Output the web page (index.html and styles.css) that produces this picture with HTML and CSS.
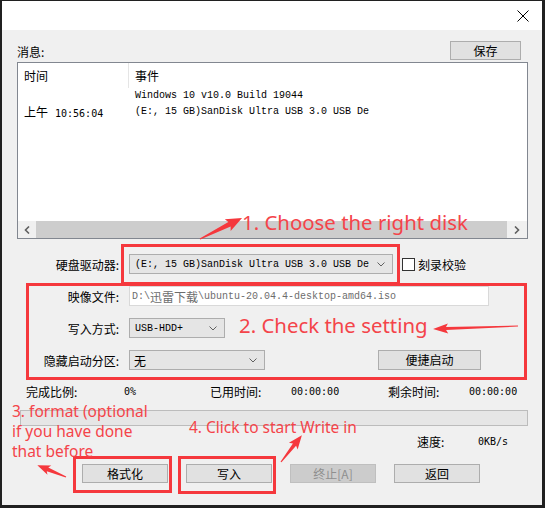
FILE: index.html
```html
<!DOCTYPE html>
<html lang="zh-CN">
<head>
<meta charset="utf-8">
<title>写入硬盘映像</title>
<link rel="stylesheet" href="styles.css">
</head>
<body>
<div class="window">
  <div class="titlebar">
    <svg class="close" width="12" height="12" viewBox="0 0 12 12"><path d="M0.5 0.5 L11.5 11.5 M11.5 0.5 L0.5 11.5" stroke="#000" stroke-width="1" fill="none"/></svg>
  </div>
  <div class="body">
    <div class="msg-head">
      <span class="msg-label">消息:</span>
      <div class="btn save">保存</div>
    </div>
    <div class="listbox">
      <div class="lb-head">
        <div class="lb-col-time">时间</div>
        <div class="lb-col-event">事件</div>
      </div>
      <div class="lb-rows">
        <div class="lb-row"><div class="lb-time"></div><div class="lb-event mono">Windows 10 v10.0 Build 19044</div></div>
        <div class="lb-row"><div class="lb-time">上午<span class="num clock">10:56:04</span></div><div class="lb-event mono">(E:, 15 GB)SanDisk Ultra USB 3.0 USB De</div></div>
      </div>
      <div class="hscroll">
        <div class="sb-arrow"><svg width="6" height="8" viewBox="0 0 6 8"><path d="M5 0.5 L1.5 4 L5 7.5" stroke="#606060" stroke-width="1.6" fill="none"/></svg></div>
        <div class="sb-thumb"></div>
        <div class="sb-arrow sb-right"><svg width="6" height="8" viewBox="0 0 6 8"><path d="M1 0.5 L4.5 4 L1 7.5" stroke="#606060" stroke-width="1.6" fill="none"/></svg></div>
      </div>
    </div>

    <div class="frow first">
      <div class="flabel">硬盘驱动器:</div>
      <div class="combo combo-disk"><span class="mono">(E:, 15 GB)SanDisk Ultra USB 3.0 USB De</span><svg class="chev" width="8" height="5" viewBox="0 0 8 5"><path d="M0.5 0.5 L4 4 L7.5 0.5" stroke="#606060" stroke-width="1" fill="none"/></svg></div>
      <div class="checkbox"></div>
      <div class="check-label">刻录校验</div>
    </div>
    <div class="frow">
      <div class="flabel">映像文件:</div>
      <div class="field"><span class="mono">D:\</span><span class="cjk">迅雷下载</span><span class="mono">\ubuntu-20.04.4-desktop-amd64.iso</span></div>
    </div>
    <div class="frow">
      <div class="flabel">写入方式:</div>
      <div class="combo combo-mode"><span class="mono">USB-HDD+</span><svg class="chev" width="8" height="5" viewBox="0 0 8 5"><path d="M0.5 0.5 L4 4 L7.5 0.5" stroke="#606060" stroke-width="1" fill="none"/></svg></div>
    </div>
    <div class="frow">
      <div class="flabel">隐藏启动分区:</div>
      <div class="combo combo-hide"><span>无</span><svg class="chev" width="8" height="5" viewBox="0 0 8 5"><path d="M0.5 0.5 L4 4 L7.5 0.5" stroke="#606060" stroke-width="1" fill="none"/></svg></div>
      <div class="btn quick">便捷启动</div>
    </div>

    <div class="stats">
      <span>完成比例:</span><span class="num">0%</span>
      <span>已用时间:</span><span class="num">00:00:00</span>
      <span>剩余时间:</span><span class="num">00:00:00</span>
    </div>
    <div class="progress"></div>
    <div class="speed"><span class="speed-label">速度:</span><span class="num">0KB/s</span></div>
    <div class="actions">
      <div class="btn act">格式化</div>
      <div class="btn act">写入</div>
      <div class="btn act disabled">终止[A]</div>
      <div class="btn act">返回</div>
    </div>
  </div>

  <div class="annot">
    <div class="rbox rbox1"></div>
    <div class="rbox rbox2"></div>
    <div class="rbox rbox3"></div>
    <div class="rbox rbox4"></div>
    <div class="note note1">1. Choose the right disk</div>
    <div class="note note2">2. Check the setting</div>
    <div class="note note3">3. format (optional<br>if you have done<br>that before</div>
    <div class="note note4">4. Click to start Write in</div>
    <svg class="arrows" width="545" height="508" viewBox="0 0 545 508">
      <g fill="#f5383d">
        <polygon transform="translate(200,239) rotate(-26.6)" points="0,-0.6 33,-2.5 31,-6.5 47,0 31,6.5 33,2.5 0,0.6"/>
        <polygon transform="translate(518,326) rotate(178)" points="0,-0.5 72,-1.6 70,-5 85,0 70,5 72,1.6 0,0.5"/>
        <polygon transform="translate(66,477) rotate(202.5)" points="0,-0.6 20,-2 18,-5 31,0 18,5 20,2 0,0.6"/>
        <polygon transform="translate(281,462) rotate(-52.1)" points="0,-0.6 22,-2 20,-5.5 34,0 20,5.5 22,2 0,0.6"/>
      </g>
    </svg>
  </div>
</div>
</body>
</html>
```
FILE: styles.css
```css
* { box-sizing: border-box; }
html, body { margin: 0; padding: 0; }
body {
  width: 545px;
  height: 508px;
  overflow: hidden;
  background: #f0f0f0;
  font-family: "Noto Sans CJK SC", "Noto Sans", sans-serif;
  font-size: 12px;
  color: #000;
}
.mono { font-family: "Liberation Mono", "Noto Sans CJK SC", monospace; font-size: 10px; }
.num { font-family: "DejaVu Sans Mono", monospace; font-size: 10px; }
.cjk { font-family: "Noto Sans CJK SC", sans-serif; font-size: 12px; }
.clock { margin-left: 7px; }

.window {
  position: relative;
  width: 545px;
  height: 508px;
  border-style: solid;
  border-color: #202020;
  border-width: 1px 3px 3px 2px;
  background: #f0f0f0;
  overflow: hidden;
}
.titlebar {
  height: 29px;
  background: #fff;
  display: flex;
  justify-content: flex-end;
  align-items: flex-start;
  padding: 9px 13px 0 0;
}
.close { display: block; }

.msg-head {
  display: flex;
  align-items: flex-end;
  height: 19px;
  margin-top: 11px;
  padding: 0 21px 0 15px;
}
.msg-label { line-height: 14px; margin-bottom: 1px; }
.btn {
  display: flex;
  align-items: center;
  justify-content: center;
  height: 19px;
  background: #e1e1e1;
  border: 1px solid #adadad;
  font-size: 12px;
  line-height: 1;
}
.save { margin-left: auto; width: 71px; }

.listbox {
  margin: 2px 0 0 15px;
  width: 511px;
  height: 177px;
  border: 1px solid #828790;
  background: #fff;
  display: flex;
  flex-direction: column;
}
.lb-head { display: flex; height: 25px; line-height: 25px; }
.lb-col-time { width: 111px; padding-left: 6px; border-right: 1px solid #e5e5e5; }
.lb-col-event { padding-left: 6px; }
.lb-rows { flex: 1; }
.lb-row { display: flex; height: 16px; line-height: 16px; }
.lb-time { width: 111px; padding-left: 6px; white-space: nowrap; }
.lb-event { padding-left: 6px; white-space: nowrap; }
.hscroll { display: flex; height: 17px; background: #f0f0f0; }
.sb-arrow { width: 18px; display: flex; align-items: center; justify-content: center; }
.sb-right { width: 20px; }
.sb-arrow svg { display: block; }
.sb-thumb { flex: 1; background: #cdcdcd; }

.frow {
  display: flex;
  align-items: center;
  height: 20px;
  margin-top: 12px;
}
.frow.first { margin-top: 15px; }
.flabel { width: 117px; margin-right: 10px; text-align: right; white-space: nowrap; }
.combo {
  height: 20px;
  background: #e5e5e5;
  border: 1px solid #adadad;
  display: flex;
  align-items: center;
  padding: 0 7px 0 5px;
  white-space: nowrap;
}
.combo .chev { margin-left: auto; display: block; }
.combo-disk { width: 264px; }
.combo-mode { width: 96px; }
.combo-hide { width: 136px; padding-left: 4px; }
.checkbox {
  width: 13px;
  height: 13px;
  border: 1px solid #333;
  background: #fff;
  margin-left: 9px;
}
.check-label { margin-left: 3px; }
.field {
  width: 360px;
  height: 20px;
  background: #fff;
  border: 1px solid #d9d9d9;
  color: #6d6d6d;
  display: flex;
  align-items: center;
  padding-left: 2px;
  white-space: nowrap;
}
.quick { width: 103px; height: 20px; margin-left: 113px; }

.stats {
  display: grid;
  grid-template-columns: 98px 86px 81px 97px 81px auto;
  align-items: center;
  margin-top: 15px;
  padding-left: 24px;
  height: 13px;
  line-height: 13px;
}
.progress {
  margin: 12px 0 0 18px;
  width: 508px;
  height: 16px;
  border: 1px solid #bcbcbc;
  background: #e6e6e6;
}
.speed {
  display: flex;
  align-items: center;
  margin-top: 8px;
  padding-left: 415px;
  height: 16px;
  line-height: 16px;
}
.speed-label { width: 61px; }
.actions {
  display: flex;
  gap: 18px;
  margin-top: 14px;
  padding-left: 80px;
}
.act { width: 86px; }
.act.disabled { background: #cccccc; border-color: #bfbfbf; color: #8f8f8f; }

.annot {
  position: absolute;
  left: -2px;
  top: -1px;
  width: 545px;
  height: 508px;
  pointer-events: none;
}
.rbox { position: absolute; border: 3px solid #f5383d; }
.rbox1 { left: 121px; top: 244px; width: 279px; height: 41px; }
.rbox2 { left: 26px; top: 283px; width: 501px; height: 97px; }
.rbox3 { left: 73px; top: 456px; width: 99px; height: 37px; }
.rbox4 { left: 178px; top: 456px; width: 98px; height: 38px; }
.note {
  position: absolute;
  font-family: "Noto Sans", "Open Sans", sans-serif;
  color: #f4444a;
  white-space: nowrap;
}
.note1 { left: 242px; top: 212px; font-size: 20.4px; line-height: 20px; }
.note2 { left: 239px; top: 315px; font-size: 20.4px; line-height: 20px; }
.note3 { left: 12px; top: 401px; font-size: 15.5px; line-height: 20px; }
.note4 { left: 189px; top: 419px; font-size: 15.5px; line-height: 16px; }
.arrows { position: absolute; left: 0; top: 0; }
```
